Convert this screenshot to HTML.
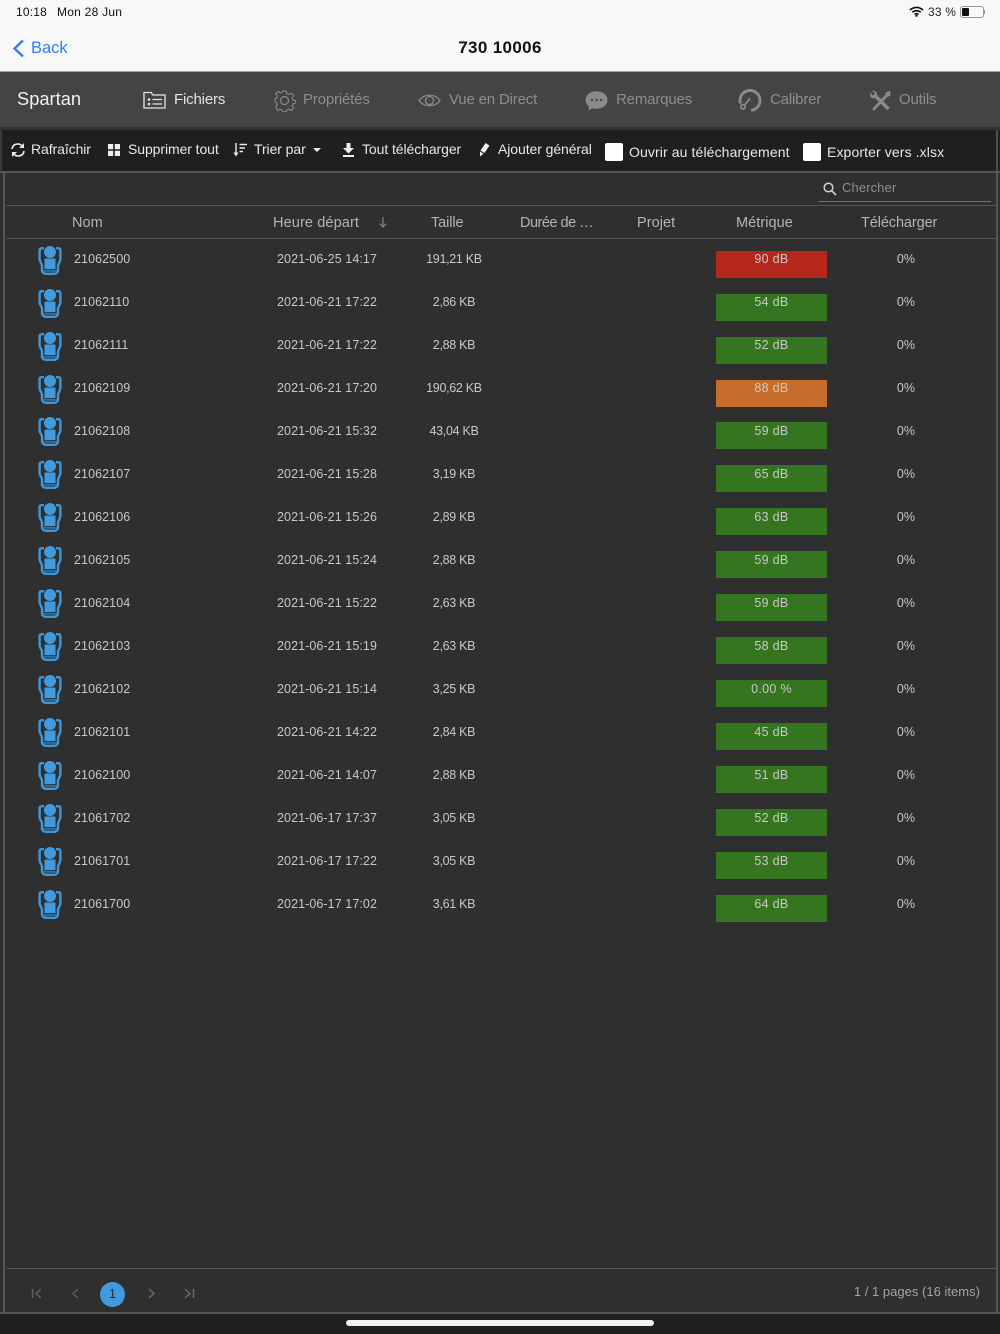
<!DOCTYPE html>
<html lang="fr"><head><meta charset="utf-8"><title>730 10006</title>
<style>
html,body{margin:0;padding:0;background:#1f1f1f}
#p{position:relative;width:1000px;height:1334px;overflow:hidden;background:#1f1f1f;font-family:"Liberation Sans",sans-serif}
#p div,#p svg{position:absolute}
.t{white-space:nowrap;line-height:20px;height:20px}
.nav{font-size:15px;color:#8e8e8e;top:90px;letter-spacing:-.17px}
.tb{font-size:14px;color:#e8e8e8;top:139px;letter-spacing:-.08px}
.tc{top:142px;letter-spacing:.11px}
.h{font-size:14.5px;color:#b4b4b4;top:213px;letter-spacing:.05px}
.r{left:6px;width:990px;height:43px}
.n,.d,.s,.m,.c{top:11px;font-size:12.5px;color:#c8c8c8;letter-spacing:.08px;line-height:20px;height:20px;white-space:nowrap}
.n{left:68px}.d{left:271px}
.s{left:398px;width:100px;text-align:center;letter-spacing:-.3px}
.b{left:710px;top:13px;width:111px;height:27px}
.m{left:710px;width:111px;text-align:center;letter-spacing:.3px}
.c{left:850px;width:100px;text-align:center}
.g{background:#35751f}.e{background:#b4271a}.o{background:#c76d2b}
.i{left:32px;top:7px;width:24px;height:30px}
.x .b{top:12px}.x .i{top:6px}
</style></head><body><div id="p">
<svg width="0" height="0" style="left:0;top:0"><defs><symbol id="u" viewBox="0 0 24 30"><path d="M6 3.200H3.800C2.200 3.200 1.600 4.200 1.600 5.500V14C1.600 17 4 18.500 4 21v4c0 2.500 2 3.800 4 3.800h8c2 0 4-1.300 4-3.800v-4c0-2.500 2.400-4 2.400-7V5.500C22.400 4.200 21.800 3.200 20.200 3.200H18" fill="none" stroke="#3f97da" stroke-width="2.400"/><path d="M5.500 25.800h13" stroke="#2d6f9f" stroke-width="2"/><circle cx="12" cy="7" r="6" fill="#419ade"/><rect x="6.500" y="13.500" width="11" height="10.500" fill="#419ade"/></symbol></defs></svg>

<div style="left:0;top:0;width:1000px;height:72px;background:#f8f8f8"></div>
<div class="t" style="left:16px;top:2px;font-size:12px;color:#111;letter-spacing:.2px">10:18</div>
<div class="t" style="left:57px;top:2px;font-size:12px;color:#111;letter-spacing:.25px">Mon 28 Jun</div>
<svg style="left:909px;top:6px" width="15" height="11" viewBox="0 0 15 11"><path d="M1 4C4.800.6 10.200.6 14 4M3.300 6.300C5.800 4.200 9.200 4.200 11.700 6.300M5.500 8.400C6.700 7.500 8.300 7.500 9.500 8.400" fill="none" stroke="#111" stroke-width="1.600"/><circle cx="7.500" cy="9.700" r="1.100" fill="#111"/></svg>
<div class="t" style="left:928px;top:2px;font-size:12px;color:#222;letter-spacing:.2px">33 %</div>
<div style="left:960px;top:6px;width:22px;height:10px;border:1px solid #999;border-radius:3px"></div>
<div style="left:962px;top:8px;width:7px;height:8px;background:#111;border-radius:1px"></div>
<div style="left:984px;top:10px;width:1px;height:4px;background:#999"></div>
<svg style="left:12px;top:39px" width="13" height="19" viewBox="0 0 13 19"><path d="M11 1.500 2.500 9.500 11 17.500" fill="none" stroke="#2f7df6" stroke-width="2.300"/></svg>
<div class="t" style="left:31px;top:38px;font-size:16.500px;color:#2f7df6">Back</div>
<div class="t" style="left:300px;width:400px;top:38px;font-size:17px;font-weight:bold;color:#111;text-align:center;letter-spacing:.35px">730 10006</div>

<div style="left:0;top:71px;width:1000px;height:1px;background:#a8a8a8"></div>
<div style="left:0;top:72px;width:1000px;height:55px;background:#444"></div>
<div style="left:0;top:127px;width:1000px;height:3px;background:#333"></div>
<div class="t" style="left:17px;top:89px;font-size:18.300px;color:#f0f0f0">Spartan</div>

<svg style="left:143px;top:91px" width="23" height="18" viewBox="0 0 23 18"><path d="M1 17V1.500h7l2 2.500h12v13z" fill="none" stroke="#e6e6e6" stroke-width="1.300"/><circle cx="6" cy="8.500" r="1.300" fill="#e6e6e6"/><circle cx="6" cy="13" r="1.300" fill="#e6e6e6"/><path d="M9.500 8.500H19M9.500 13H19" stroke="#e6e6e6" stroke-width="1.300"/></svg>
<div class="t nav" style="left:174px;color:#e4e4e4">Fichiers</div>

<svg style="left:273px;top:89px" width="23" height="23" viewBox="0 0 23 23"><g fill="none" stroke="#8a8a8a" stroke-width="1.200"><circle cx="11.500" cy="11.500" r="4"/><path d="M9.600 1h3.800l.6 3 2.400 1 2.600-1.700 2.700 2.700-1.700 2.600 1 2.400 3 .6v2.800l-3 .6-1 2.400 1.700 2.600-2.700 2.700-2.600-1.700-2.400 1-.6 2h-3.800l-.6-2-2.400-1-2.600 1.700L1.700 19l1.700-2.600-1-2.400-1.400-.6v-3.800l1.400-.6 1-2.400L1.700 4l2.700-2.700L7 3l2-1z" transform="translate(1.200 1.200) scale(.9)"/></g></svg>
<div class="t nav" style="left:303px">Propriétés</div>

<svg style="left:418px;top:93px" width="23" height="15" viewBox="0 0 23 15"><path d="M1 7.500C6 .5 17 .5 22 7.500 17 14.500 6 14.500 1 7.500z" fill="none" stroke="#8a8a8a" stroke-width="1.300"/><circle cx="11.500" cy="7.500" r="4" fill="none" stroke="#8a8a8a" stroke-width="1.300"/></svg>
<div class="t nav" style="left:449px">Vue en Direct</div>

<svg style="left:585px;top:90px" width="23" height="21" viewBox="0 0 23 21"><ellipse cx="11.500" cy="10" rx="11" ry="8.800" fill="#8a8a8a"/><path d="M4 15 3.500 20.500 10 17z" fill="#8a8a8a"/><circle cx="7" cy="10" r="1.200" fill="#444"/><circle cx="11.500" cy="10" r="1.200" fill="#444"/><circle cx="16" cy="10" r="1.200" fill="#444"/></svg>
<div class="t nav" style="left:616px">Remarques</div>

<svg style="left:738px;top:89px" width="24" height="23" viewBox="0 0 24 23"><path d="M2.500 14.500A10 10 0 1 1 13 21.400" fill="none" stroke="#8a8a8a" stroke-width="3"/><circle cx="5" cy="17.800" r="2.200" fill="none" stroke="#8a8a8a" stroke-width="1.800"/><path d="M6.500 16 12 9.500" stroke="#8a8a8a" stroke-width="1.800"/></svg>
<div class="t nav" style="left:770px">Calibrer</div>

<svg style="left:869px;top:90px" width="22" height="21" viewBox="0 0 22 21"><path d="M4 20 18 5" stroke="#8a8a8a" stroke-width="2.800"/><path d="M16 3l5-2.500 .5 5-3 1.500z" fill="#8a8a8a"/><path d="M19.500 19 7 6.500" stroke="#8a8a8a" stroke-width="3.600"/><path d="M1 2.500 4 5.500 6 3.500 3 .8C6 0 9 2.500 8 6L5.500 8.500C3 9 .2 6 1 2.500z" fill="#8a8a8a"/></svg>
<div class="t nav" style="left:899px">Outils</div>

<div style="left:0;top:130px;width:998px;height:41px;background:#1f1f1f;border-right:2px solid #4f4f4f;border-left:2px solid #3a3a3a;box-sizing:border-box"></div>
<div style="left:0;top:171px;width:1000px;height:1142px;background:#2f2f2f"></div>
<div style="left:0;top:171px;width:1000px;height:2px;background:#565656"></div>
<div style="left:3px;top:173px;width:2px;height:1141px;background:#565656"></div>
<div style="left:996px;top:173px;width:2px;height:1141px;background:#565656"></div>

<svg style="left:10px;top:142px" width="16" height="16" viewBox="0 0 16 16"><path d="M2 7C2.500 3.500 5 2 8 2c2 0 3.500 1 4.500 2.500M14 9c-.5 3.500-3 5-6 5-2 0-3.500-1-4.500-2.500" fill="none" stroke="#eee" stroke-width="1.600"/><path d="M14 1v5h-5zM2 15v-5h5z" fill="#eee"/></svg>
<div class="t tb" style="left:31px">Rafraîchir</div>
<svg style="left:108px;top:144px" width="12" height="12" viewBox="0 0 12 12"><path d="M0 0h5.200v5.200H0zM6.800 0H12v5.200H6.800zM0 6.800h5.200V12H0zM6.800 6.800H12V12H6.800z" fill="#eee"/></svg>
<div class="t tb" style="left:128px">Supprimer tout</div>
<svg style="left:233px;top:143px" width="14" height="14" viewBox="0 0 14 14"><path d="M3 0v11.500" stroke="#eee" stroke-width="1.400"/><path d="M.5 9.500h5L3 13.500z" fill="#eee"/><path d="M6.500 1.500H14M6.500 5H12M6.500 8.500H10" stroke="#eee" stroke-width="1.500"/></svg>
<div class="t tb" style="left:254px">Trier par</div>
<svg style="left:313px;top:148px" width="8" height="4" viewBox="0 0 8 4"><path d="M0 0h8L4 4z" fill="#eee"/></svg>
<svg style="left:342px;top:143px" width="13" height="14" viewBox="0 0 13 14"><path d="M4.500 0h4v5H12L6.500 10.500 1 5h3.500zM1 12h11v2H1z" fill="#eee"/></svg>
<div class="t tb" style="left:362px">Tout télécharger</div>
<svg style="left:478px;top:143px" width="12" height="14" viewBox="0 0 12 14"><path d="M7.500 0 11.500 2.500 6.500 10 2.500 7.500zM2 8.500 5.500 10.700 2 13.500z" fill="#eee"/></svg>
<div class="t tb" style="left:498px">Ajouter général</div>
<div style="left:605px;top:143px;width:18px;height:18px;background:#fff;border-radius:2px"></div>
<div class="t tb tc" style="left:629px">Ouvrir au téléchargement</div>
<div style="left:803px;top:143px;width:18px;height:18px;background:#fff;border-radius:2px"></div>
<div class="t tb tc" style="left:827px">Exporter vers .xlsx</div>

<svg style="left:823px;top:182px" width="14" height="14" viewBox="0 0 14 14"><circle cx="5.500" cy="5.500" r="4.300" fill="none" stroke="#d0d0d0" stroke-width="1.500"/><path d="M8.800 8.800 13 13" stroke="#d0d0d0" stroke-width="1.700"/></svg>
<div class="t" style="left:842px;top:178px;font-size:13px;color:#8e8e8e;letter-spacing:.1px">Chercher</div>
<div style="left:818px;top:201px;width:173px;height:1px;background:#707070"></div>
<div style="left:6px;top:205px;width:990px;height:1px;background:#555"></div>
<div style="left:6px;top:238px;width:990px;height:1px;background:#555"></div>

<div class="t h" style="left:72px">Nom</div>
<div class="t h" style="left:273px;letter-spacing:.12px">Heure départ</div>
<svg style="left:379px;top:217px" width="8" height="11" viewBox="0 0 8 11"><path d="M4 0v10M.7 6.700 4 10l3.300-3.300" fill="none" stroke="#8a8a8a" stroke-width="1.100"/></svg>
<div class="t h" style="left:431px;letter-spacing:-.1px">Taille</div>
<div class="t h" style="left:520px;letter-spacing:-.5px">Durée de …</div>
<div class="t h" style="left:637px">Projet</div>
<div class="t h" style="left:736px">Métrique</div>
<div class="t h" style="left:861px;letter-spacing:-.1px">Télécharger</div>

<div class="r" style="top:238px"><svg class="i"><use href="#u"/></svg><div class="n">21062500</div><div class="d">2021-06-25 14:17</div><div class="s">191,21 KB</div><div class="b e"></div><div class="m">90 dB</div><div class="c">0%</div></div>
<div class="r" style="top:281px"><svg class="i"><use href="#u"/></svg><div class="n">21062110</div><div class="d">2021-06-21 17:22</div><div class="s">2,86 KB</div><div class="b g"></div><div class="m">54 dB</div><div class="c">0%</div></div>
<div class="r" style="top:324px"><svg class="i"><use href="#u"/></svg><div class="n">21062111</div><div class="d">2021-06-21 17:22</div><div class="s">2,88 KB</div><div class="b g"></div><div class="m">52 dB</div><div class="c">0%</div></div>
<div class="r" style="top:367px"><svg class="i"><use href="#u"/></svg><div class="n">21062109</div><div class="d">2021-06-21 17:20</div><div class="s">190,62 KB</div><div class="b o"></div><div class="m">88 dB</div><div class="c">0%</div></div>
<div class="r x" style="top:410px"><svg class="i"><use href="#u"/></svg><div class="n">21062108</div><div class="d">2021-06-21 15:32</div><div class="s">43,04 KB</div><div class="b g"></div><div class="m">59 dB</div><div class="c">0%</div></div>
<div class="r x" style="top:453px"><svg class="i"><use href="#u"/></svg><div class="n">21062107</div><div class="d">2021-06-21 15:28</div><div class="s">3,19 KB</div><div class="b g"></div><div class="m">65 dB</div><div class="c">0%</div></div>
<div class="r x" style="top:496px"><svg class="i"><use href="#u"/></svg><div class="n">21062106</div><div class="d">2021-06-21 15:26</div><div class="s">2,89 KB</div><div class="b g"></div><div class="m">63 dB</div><div class="c">0%</div></div>
<div class="r x" style="top:539px"><svg class="i"><use href="#u"/></svg><div class="n">21062105</div><div class="d">2021-06-21 15:24</div><div class="s">2,88 KB</div><div class="b g"></div><div class="m">59 dB</div><div class="c">0%</div></div>
<div class="r x" style="top:582px"><svg class="i"><use href="#u"/></svg><div class="n">21062104</div><div class="d">2021-06-21 15:22</div><div class="s">2,63 KB</div><div class="b g"></div><div class="m">59 dB</div><div class="c">0%</div></div>
<div class="r x" style="top:625px"><svg class="i"><use href="#u"/></svg><div class="n">21062103</div><div class="d">2021-06-21 15:19</div><div class="s">2,63 KB</div><div class="b g"></div><div class="m">58 dB</div><div class="c">0%</div></div>
<div class="r x" style="top:668px"><svg class="i"><use href="#u"/></svg><div class="n">21062102</div><div class="d">2021-06-21 15:14</div><div class="s">3,25 KB</div><div class="b g"></div><div class="m">0.00 %</div><div class="c">0%</div></div>
<div class="r x" style="top:711px"><svg class="i"><use href="#u"/></svg><div class="n">21062101</div><div class="d">2021-06-21 14:22</div><div class="s">2,84 KB</div><div class="b g"></div><div class="m">45 dB</div><div class="c">0%</div></div>
<div class="r x" style="top:754px"><svg class="i"><use href="#u"/></svg><div class="n">21062100</div><div class="d">2021-06-21 14:07</div><div class="s">2,88 KB</div><div class="b g"></div><div class="m">51 dB</div><div class="c">0%</div></div>
<div class="r x" style="top:797px"><svg class="i"><use href="#u"/></svg><div class="n">21061702</div><div class="d">2021-06-17 17:37</div><div class="s">3,05 KB</div><div class="b g"></div><div class="m">52 dB</div><div class="c">0%</div></div>
<div class="r x" style="top:840px"><svg class="i"><use href="#u"/></svg><div class="n">21061701</div><div class="d">2021-06-17 17:22</div><div class="s">3,05 KB</div><div class="b g"></div><div class="m">53 dB</div><div class="c">0%</div></div>
<div class="r x" style="top:883px"><svg class="i"><use href="#u"/></svg><div class="n">21061700</div><div class="d">2021-06-17 17:02</div><div class="s">3,61 KB</div><div class="b g"></div><div class="m">64 dB</div><div class="c">0%</div></div>

<div style="left:6px;top:1268px;width:990px;height:1px;background:#555"></div>
<svg style="left:31px;top:1288px" width="11" height="11" viewBox="0 0 11 11"><path d="M1.500 1v9M10 1 5 5.500 10 10" fill="none" stroke="#5e5e5e" stroke-width="1.500"/></svg>
<svg style="left:70px;top:1288px" width="11" height="11" viewBox="0 0 11 11"><path d="M8 1 3 5.500 8 10" fill="none" stroke="#5e5e5e" stroke-width="1.500"/></svg>
<div style="left:100px;top:1282px;width:25px;height:25px;border-radius:50%;background:#419ade"></div>
<div class="t" style="left:100px;width:25px;top:1284px;font-size:12.500px;color:#1c2a36;text-align:center">1</div>
<svg style="left:146px;top:1288px" width="11" height="11" viewBox="0 0 11 11"><path d="M3 1 8 5.500 3 10" fill="none" stroke="#6a6a6a" stroke-width="1.500"/></svg>
<svg style="left:184px;top:1288px" width="11" height="11" viewBox="0 0 11 11"><path d="M1 1 6 5.500 1 10M9.500 1v9" fill="none" stroke="#6a6a6a" stroke-width="1.500"/></svg>
<div class="t" style="right:20px;top:1282px;font-size:13px;color:#a4a4a4;letter-spacing:.02px">1 / 1 pages (16 items)</div>

<div style="left:0;top:1312px;width:1000px;height:2px;background:#565656"></div>
<div style="left:0;top:1314px;width:1000px;height:20px;background:#1f1f1f"></div>
<div style="left:346px;top:1320px;width:308px;height:6px;border-radius:3px;background:#f2f2f2"></div>
</div></body></html>
